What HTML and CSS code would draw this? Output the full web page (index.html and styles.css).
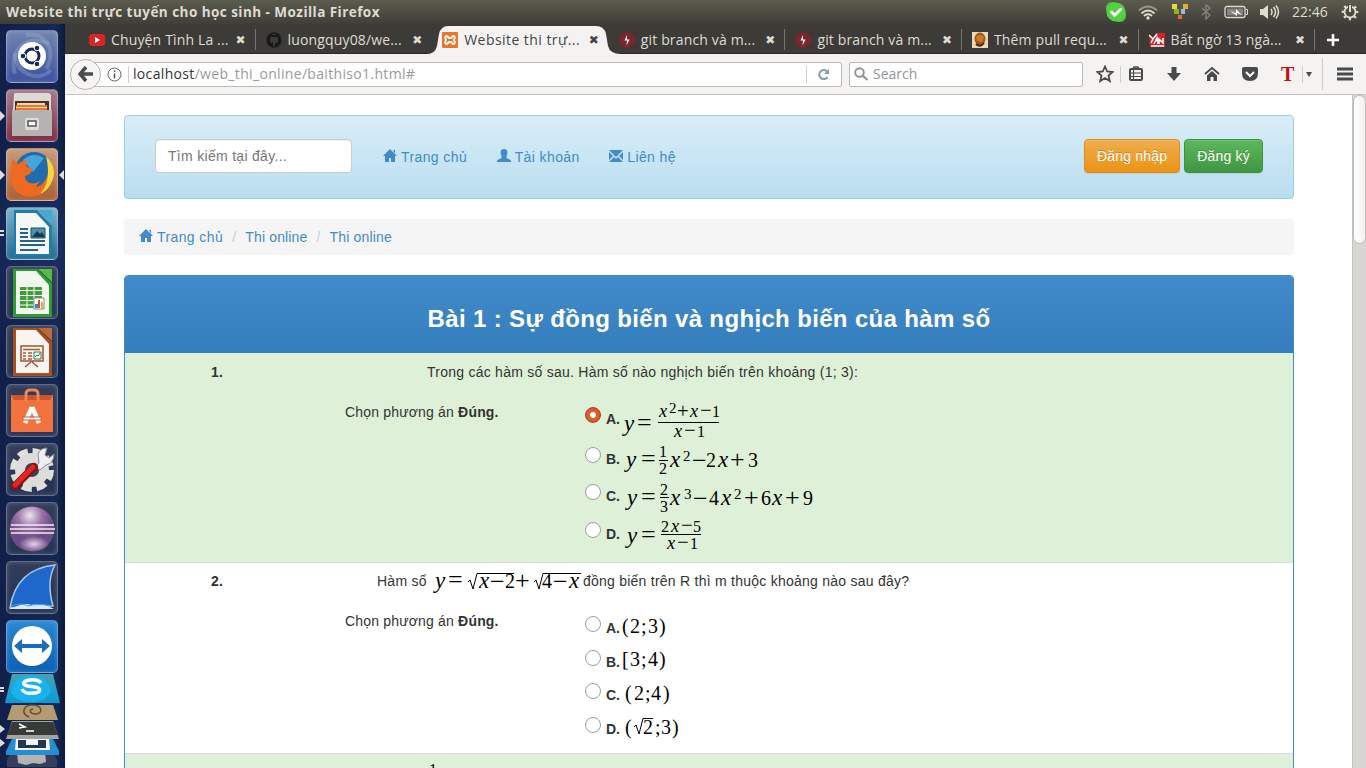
FILE: index.html
```html
<!DOCTYPE html>
<html lang="vi">
<head>
<meta charset="utf-8">
<title>Website thi trực tuyến cho học sinh</title>
<link rel="stylesheet" href="styles.css">
</head>
<body>
<header class="titlebar">
  <span class="window-title">Website thi trực tuyến cho học sinh - Mozilla Firefox</span>
  <div class="tray">
    <svg class="skype" width="22" height="22" viewBox="0 0 22 22"><rect x="1" y="1" width="13" height="13" rx="6" fill="#47c83b"/><rect x="8" y="8" width="13" height="13" rx="6" fill="#47c83b"/><circle cx="11" cy="11" r="9.6" fill="#53d044"/><path d="M6.5 11l3.2 3.2 6-6" fill="none" stroke="#fff" stroke-width="2.8" stroke-linecap="round"/></svg>
    <svg class="wifi" width="20" height="16" viewBox="0 0 20 16"><g fill="none" stroke-width="1.9" stroke-linecap="round"><path d="M1.5 6Q10-1 18.500 6" stroke="#96948c"/><path d="M4 9Q10 4 16 9M6.500 11.500Q10 9 13.500 11.500" stroke="#dfdbd2"/></g><circle cx="10" cy="14" r="1.7" fill="#dfdbd2"/></svg>
    <svg class="unikey" width="18" height="16" viewBox="0 0 18 16"><path fill="#f1d34b" d="M1 0h5v5H1z"/><path fill="#dcae3d" d="M12 0h5v5h-5z"/><path fill="#82b91f" d="M3 5h5v5H3z"/><path fill="#94b9e5" d="M10 5h4v5h-4z"/><path fill="#e86b27" d="M7 11h4v4H7z"/></svg>
    <svg class="bt" width="10" height="16" viewBox="0 0 10 16"><path d="M1 4l8 7-4 4V1l4 3-8 7" fill="none" stroke="#85837c" stroke-width="1.3"/></svg>
    <svg class="battery" width="24" height="14" viewBox="0 0 24 14"><rect x="1" y="1.500" width="20" height="11" rx="2" fill="none" stroke="#dfdbd2" stroke-width="1.300"/><path d="M3 3.500h16v7H3z" fill="#85837d"/><path d="M22 4.500h1.500v5H22" fill="none" stroke="#dfdbd2"/><path d="M6 6l6 2V4l6 6-5-2v3z" fill="#f5f3ee"/></svg>
    <svg class="sound" width="20" height="16" viewBox="0 0 20 16"><path d="M0 5h3l5-4v14l-5-4H0z" fill="#dfdbd2"/><path d="M11 5q2 3 0 6M13.500 3q4 5 0 10M16 1.500q5 6.500 0 13" fill="none" stroke="#dfdbd2" stroke-width="1.500"/></svg>
    <span class="clock">22:46</span>
    <svg class="gear" width="18" height="18" viewBox="0 0 18 18"><circle cx="9" cy="9" r="7" fill="none" stroke="#dfdbd2" stroke-width="2.600" stroke-dasharray="2.200 3.300" stroke-dashoffset="1.100"/><circle cx="9" cy="9" r="5.500" fill="none" stroke="#dfdbd2" stroke-width="1.800"/><path d="M7 1h4v6H7z" fill="#4a4943"/><path d="M9 2v7" stroke="#dfdbd2" stroke-width="2"/></svg>
  </div>
</header>
<div class="desktop">
<aside class="launcher">
  <div class="tile dash"><svg viewBox="0 0 52 53"><g fill="none" stroke="#aabbd9" stroke-opacity=".3" stroke-width="4"><path d="M9 44C2 20 22 3 43 14"/><path d="M45 40C32 54 9 43 9 23"/><path d="M20 5C43 2 50 24 40 39"/></g><circle cx="26" cy="26" r="14" fill="#fff"/><circle cx="26" cy="26" r="7" fill="none" stroke="#18285a" stroke-width="3"/><g fill="#18285a" stroke="#fff"><circle cx="17" cy="26" r="2.800"/><circle cx="31" cy="18" r="2.800"/><circle cx="31" cy="34" r="2.800"/></g></svg></div>
  <div class="tile files"><svg viewBox="0 0 52 53"><path d="M8 5q0-1 2-1h32q2 0 3 2v15H7z" fill="#ddd9d5"/><path d="M9 12h34v12H9z" fill="#4a302c"/><path d="M10 16h31v7H10z" fill="#e57930"/><path d="M11 14h28v2H11zM10 18h31v1H10z" fill="#f7d7a8"/><path d="M6 21h40v26H6z" fill="#b4b3b1"/><rect x="19" y="29" width="14" height="12" rx="2" fill="#ddd"/><path d="M22 32h8v5h-8z" fill="#fff" stroke="#555" stroke-width="1.500"/></svg><i class="pip"></i></div>
  <div class="tile firefox"><svg viewBox="0 0 52 53"><circle cx="28" cy="23" r="19" fill="#216cad"/><path d="M17 12Q27 3 38 10L27 24z" fill="#45a5dc"/><path d="M43 13C49 24 47 38 35 46 20 53 6 45 4 31L6 11l6 5q5-4 10-4-3 4-1 7l6 2-3 5-5 2c0 7 8 10 15 5l-4 6c9-2 14-12 13-26z" fill="#ee6a20"/><path d="M40 8q12 12 6 25-3 9-12 13 12-13 6-38z" fill="#ffd43b"/></svg><i class="pip"></i><i class="pip right"></i></div>
  <div class="tile writer"><svg viewBox="0 0 52 53"><path d="M8 3h23l15 16v30H8z" fill="#207daa"/><path d="M10 6h20l13 14v27H10z" fill="#f6f7f6"/><path d="M32 3h14v14z" fill="#48a8d0"/><path d="M14 22h8M14 26h8M14 30h8M14 34h25M14 38h25M14 43h18" stroke="#236582" stroke-width="2"/><path d="M25 21h14v10H25z" fill="#4c93aa" stroke="#174f65"/><path d="M26 30l5-6 3 3 2-2 3 5z" fill="#173d4b"/></svg><i class="dots"></i></div>
  <div class="tile office"><svg viewBox="0 0 52 53"><path d="M7 3h24l15 14v34H7z" fill="#2d9d32"/><path d="M10 5h20l13 14v29H10z" fill="#f3f6ee"/><path d="M32 3h14v13z" fill="#54bd43"/><path d="M14 21h22v21H14z" fill="#3c9f38"/><path d="M14 24.500h22M14 29.500h22M14 34.500h22M14 39h22M21 21v21M28 21v21" stroke="#fff"/><path d="M28 32h10v11H28z" fill="#fff" stroke="#888"/><path d="M29 38h3v4h-3z" fill="#248eda"/><path d="M32 34h2v8h-2z" fill="#d44e31"/><path d="M35 36h2v6h-2z" fill="#e5a532"/></svg></div>
  <div class="tile office"><svg viewBox="0 0 52 53"><path d="M7 3h24l15 14v34H7z" fill="#a84e21"/><path d="M10 5h20l13 14v29H10z" fill="#f8f4ef"/><path d="M32 3h14v13z" fill="#bb6a38"/><path d="M15 21h22v15H15zM25 37l-6 5m7-5 6 5" fill="none" stroke="#9f5330" stroke-width="1.500"/><path d="M17 24.500h17M17 28h3M22 28h4M17 31h3M22 31h4M17 34h3M22 34h4" stroke="#ad5732" stroke-width="1.500"/><path d="M28 27h7v7h-7z" fill="#fff" stroke="#267d48"/><path d="M29 32l2-2 1 1 2-3" fill="none" stroke="#267d48"/></svg></div>
  <div class="tile office"><svg viewBox="0 0 52 53"><path d="M5 11h42v37H5z" fill="#f2733e"/><path d="M5 11h42l-3 5H8z" fill="#cf5531"/><path d="M5 16h42v32H5z" fill="#f2733e"/><path d="M20 17V10q0-4 4-4h4q4 0 4 4v7" fill="none" stroke="#e8875f" stroke-width="3"/><path d="M19 39l6-14h2l6 14" fill="none" stroke="#fff" stroke-width="4.500"/><path d="M17 33h18v3H17z" fill="#fff" stroke="#c65a32"/></svg></div>
  <div class="tile office"><svg viewBox="0 0 52 53"><circle cx="26" cy="27" r="18" fill="none" stroke="#dfdfdd" stroke-width="8" stroke-dasharray="9.500 4.640"/><circle cx="26" cy="27" r="17" fill="#dcddda"/><circle cx="26" cy="27" r="7" fill="#39464c"/><path d="M33 20l-1-9q2-6 9-6l-2 7 4 3 5-4q0 9-8 11l-6 5-5-3z" fill="#eee" stroke="#889"/><path d="M9 43L28 24" stroke="#8e1113" stroke-width="8" stroke-linecap="round"/><path d="M9 42L27 24" stroke="#df2824" stroke-width="5" stroke-linecap="round"/></svg></div>
  <div class="tile office"><svg viewBox="0 0 52 53"><defs><radialGradient id="moon" cx=".45" cy=".2"><stop stop-color="#eee4ef"/><stop offset=".55" stop-color="#9b72a6"/><stop offset="1" stop-color="#6d4c86"/></radialGradient><radialGradient id="glow"><stop stop-color="#f0e2f5" stop-opacity=".9"/><stop offset="1" stop-color="#f0e2f5" stop-opacity="0"/></radialGradient></defs><circle cx="26" cy="27" r="22.500" fill="url(#moon)"/><ellipse cx="28" cy="42" rx="15" ry="8" fill="url(#glow)"/><path d="M5 23h43M4 27h45M5 31h43" stroke="#f3e9f5" stroke-width="1.600"/></svg></div>
  <div class="tile office"><svg viewBox="0 0 52 53"><path d="M4 47Q10 8 49 4 40 20 47 45z" fill="#1e68cc" stroke="#a0c9f4" stroke-width="1.500"/><path d="M3 48q17-7 22-4 10-3 23 4z" fill="#dce8f6"/><path d="M5 45q11-4 17 0 10-3 24 0" fill="none" stroke="#4e9be3"/></svg></div>
  <div class="tile viewer"><svg viewBox="0 0 52 53"><circle cx="26" cy="26" r="20" fill="#fff"/><path d="M8 26l8-7v5h20v-5l8 7-8 7v-5H16v5z" fill="#176db9"/></svg></div>
  <svg class="stack" viewBox="0 0 65 96"><defs><linearGradient id="blue" x2="0" y2="1"><stop stop-color="#4a9fae"/><stop offset="1" stop-color="#079cda"/></linearGradient></defs><path d="M7 88l5-11h40l5 11v7H7z" fill="#353f5b"/><path d="M17 80l5-2 5 2 6-2 6 2 6-1 1 11-6 2-7-1-7 2-8-2z" fill="#b1b4b0"/><path d="M6 79l7-14h39l7 14v4H6z" fill="#268dd1"/><path d="M16 66h33l1 12H15z" fill="#f3f6fa"/><path d="M18 68h8v5h12v-5h8v8H18z" fill="#23384e"/><path d="M6 67l6-18h41l6 18z" fill="#a2a4a1"/><path d="M7 63l5-13h41l5 13z" fill="#373b37"/><path d="M19 52l6 3-6 1m7 3h8" fill="none" stroke="#fff" stroke-width="1.500"/><path d="M7 48l5-15h41l5 15z" fill="#b59b72"/><path d="M29 45c-9-4-5-12 3-12 11 0 11 9 4 9-7 0-7-5-3-5" fill="none" stroke="#6d4a32" stroke-width="1.500"/><path d="M5 31L12 2h41l7 29z" fill="url(#blue)"/><path d="M11 20Q13 5 30 3q17 0 21 15-4 12-20 12T11 20" fill="#18b3ec"/><path d="M41 11Q38 7 30 8c-8 1-8 5-2 6l7 1c7 1 6 6-2 6-6 1-10-1-11-4" fill="none" stroke="#fff" stroke-width="3.500"/><path d="M0 16h4M0 19h4" stroke="#ddd" stroke-width="2"/><path d="M0 53l5 4-5 4M0 67l5 4-5 4" fill="#ddd"/></svg>
</aside>
<section class="browser">
  <nav class="tabs">
    <div class="tab"><svg class="fav" viewBox="0 0 16 16"><rect y="2" width="16" height="12" rx="3" fill="#dc2424"/><path d="M6 5l5 3-5 3z" fill="#fff"/></svg><span>Chuyện Tình La ...</span><b class="x">✖</b></div>
    <div class="tab no-line"><svg class="fav" viewBox="0 0 16 16"><path d="M6 15v-3q-3 1-4-2M10 15v-3q4 0 3-5l-1-4-3 1H7L4 3 3 7q-1 5 4 5" fill="none" stroke="#151513" stroke-width="2"/><circle cx="8" cy="8" r="7" fill="none" stroke="#1b1b19" stroke-width="1.500"/></svg><span>luongquy08/we...</span><b class="x">✖</b></div>
    <div class="tab active no-line"><svg class="tab-shape" viewBox="0 0 196 28" width="196" height="28"><path d="M0 28Q8 28 10 20L12 8Q14 0 21 0H169Q177 0 179 8L181 20Q183 28 194 28z" fill="#f4f3f2"/></svg><svg class="fav" viewBox="0 0 16 16"><rect width="16" height="16" rx="1" fill="#e77829"/><path d="M5 4Q2 4 4 8q-2 4 1 4l2-2h2l2 2q3 0 1-4 2-4-1-4L9 6H7z" fill="none" stroke="#fff" stroke-width="1.800"/></svg><span>Website thi trự...</span><b class="x">✖</b></div>
    <div class="tab"><svg class="fav" viewBox="0 0 16 16"><circle cx="8" cy="8" r="8" fill="#7b252c"/><path d="M8 3L5.500 8.500h2.500l-.5 5 3-6H8z" fill="#fff"/></svg><span>git branch và m...</span><b class="x">✖</b></div>
    <div class="tab"><svg class="fav" viewBox="0 0 16 16"><circle cx="8" cy="8" r="8" fill="#7b252c"/><path d="M8 3L5.500 8.500h2.500l-.5 5 3-6H8z" fill="#fff"/></svg><span>git branch và m...</span><b class="x">✖</b></div>
    <div class="tab"><svg class="fav" viewBox="0 0 16 16"><path d="M0 0h16v16H0z" fill="#e8d9b5"/><ellipse cx="8" cy="7" rx="5.500" ry="6.500" fill="#9c5a1e"/><path d="M4 5q4-4 8 0l-2 5-5-1z" fill="#cf7c20"/><path d="M4 12q4 4 8-1" stroke="#4a2712" fill="none" stroke-width="2"/></svg><span>Thêm pull requ...</span><b class="x">✖</b></div>
    <div class="tab"><svg class="fav" viewBox="0 0 16 16"><path d="M0 2l4 4 3-5 9 0v14H1z" fill="#d2232a"/><path d="M0 3l4 4 4-5M4 7l-2 4M5 12l3-6 1 6m1 0V7l4 4V6M2 14h13" stroke="#fff" stroke-width="1.500" fill="none"/></svg><span>Bất ngờ 13 ngà...</span><b class="x">✖</b></div>
    <svg class="newtab" width="14" height="14" viewBox="0 0 14 14"><path d="M7 1v12M1 7h12" stroke="#fff" stroke-width="2.600"/></svg>
  </nav>
  <div class="navbar">
    <div class="back"><svg width="16" height="16" viewBox="0 0 16 16"><path d="M8 1L2 8l6 7M2 8h13" fill="none" stroke="#4c4c4c" stroke-width="3.500"/></svg></div>
    <div class="url">
      <svg width="15" height="15" viewBox="0 0 15 15"><circle cx="7.500" cy="7.500" r="6.500" fill="none" stroke="#666"/><path d="M7.500 6.500v5M7.500 3.500v1.500" stroke="#555" stroke-width="1.500"/></svg>
      <i class="sep"></i><span class="address"><em>localhost</em>/web_thi_online/baithiso1.html#</span><i class="sep reload-sep"></i>
      <svg class="reload" width="13" height="13" viewBox="0 0 13 13"><path d="M10 3.500A4.500 4.500 0 1 0 10.500 9" fill="none" stroke="#8497a7" stroke-width="2"/><path d="M12 1v5H7z" fill="#8497a7"/></svg>
    </div>
    <div class="search"><svg width="14" height="14" viewBox="0 0 14 14"><circle cx="5.500" cy="5.500" r="4.300" fill="none" stroke="#929292" stroke-width="1.900"/><path d="M8.500 8.500l5 4.500" stroke="#929292" stroke-width="2.300"/></svg><span>Search</span></div>
    <div class="tools">
      <svg class="star" width="18" height="18" viewBox="0 0 18 18"><path d="M9 1.500l2.200 5 5.400.5-4.100 3.600 1.300 5.400L9 13l-4.800 3 1.300-5.400L1.400 7l5.400-.5z" fill="none" stroke="#4a4a4a" stroke-width="1.800"/></svg>
      <i class="sep"></i>
      <svg class="list" width="16" height="16" viewBox="0 0 16 16"><path d="M5 3l1-2h4l1 2" fill="none" stroke="#4a4a4a" stroke-width="1.500"/><rect x="2" y="3" width="12" height="11" rx="1" fill="none" stroke="#4a4a4a" stroke-width="2"/><path d="M2 7h12M2 10.500h12M5.500 4v10" stroke="#4a4a4a" stroke-width="1.200"/></svg>
      <svg class="down" width="16" height="16" viewBox="0 0 16 16"><path d="M5.500 1h5v6H15l-7 8-7-8h4.500z" fill="#4a4a4a"/></svg>
      <svg class="home" width="16" height="16" viewBox="0 0 16 16"><path d="M1 8l7-6 7 6" fill="none" stroke="#4a4a4a" stroke-width="1.800"/><path d="M3 9.500l5-4.500 5 4.500V15H9.500v-4h-3v4H3z" fill="#4a4a4a"/></svg>
      <svg class="pocket" width="18" height="16" viewBox="0 0 18 16"><path d="M3 1h12q2 0 2 2v4q0 8-8 8T1 7V3q0-2 2-2z" fill="#4a4a4a"/><path d="M5 6l4 4 4-4" fill="none" stroke="#fff" stroke-width="2"/></svg>
      <b class="tee">T</b><i class="sep"></i><i class="caret"></i><i class="sep last"></i>
      <svg class="menu" width="16" height="14" viewBox="0 0 16 14"><path d="M0 2h16M0 7h16M0 12h16" stroke="#4a4a4a" stroke-width="3"/></svg>
    </div>
  </div>
  <div class="viewport">
  <main class="page">
    <div class="well">
      <div class="field">Tìm kiếm tại đây...</div>
      <a class="link"><svg class="gi" viewBox="0 0 14 14"><path d="M7 0l7 7h-2v6H8V9H6v4H2V7H0zM10 1h2v4z" fill="#428bca"/></svg>Trang chủ</a>
      <a class="link"><svg class="gi" viewBox="0 0 14 14"><path d="M7 0c4 0 4 4 2.500 7v2l4 2q.500.500.500 2H0q0-1.500.500-2l4-2V7C3 4 3 0 7 0" fill="#428bca"/></svg>Tài khoản</a>
      <a class="link"><svg class="gi" viewBox="0 0 14 14"><path d="M0 1h14L7 8zM0 3l4 4-4 4zM14 3v8l-4-4zM5 8l2 2 2-2 5 5H0z" fill="#428bca"/></svg>Liên hệ</a>
      <button class="btn warning">Đăng nhập</button><button class="btn success">Đăng ký</button>
    </div>
    <div class="crumbs"><a><svg class="gi" viewBox="0 0 14 14"><path d="M7 0l7 7h-2v6H8V9H6v4H2V7H0zM10 1h2v4z" fill="#428bca"/></svg>Trang chủ</a><i>/</i><a>Thi online</a><i>/</i><a>Thi online</a></div>
    <section class="panel">
      <h3>Bài 1 : Sự đồng biến và nghịch biến của hàm số</h3>
      <article class="question green first">
        <b class="num">1.</b>
        <p class="ask">Trong các hàm số sau. Hàm số nào nghịch biến trên khoảng (1; 3):</p>
        <p class="pick">Chọn phương án <b>Đúng.</b></p>
        <div class="options">
          <div class="option a"><i class="radio on"></i><b>A.</b><svg class="math" viewBox="0 0 210 40"><text y="31" x="2 15"><tspan class="v">y</tspan><tspan class="op">=</tspan></text><text class="sm" y="17" x="37"><tspan class="v">x</tspan><tspan class="sup" x="47" y="13">2</tspan><tspan class="op" x="55" y="18">+</tspan><tspan class="v" x="68" y="17">x</tspan><tspan class="op" x="78">−</tspan><tspan x="90">1</tspan></text><text class="sm" y="37" x="52"><tspan class="v">x</tspan><tspan class="op" x="62">−</tspan><tspan x="75">1</tspan></text><path d="M36 22.500h61"/></svg></div>
          <div class="option b"><i class="radio"></i><b>B.</b><svg class="math" viewBox="0 0 210 40"><text y="27" x="4 19"><tspan class="v">y</tspan><tspan class="op">=</tspan></text><text class="sm" x="37" y="17">1<tspan x="37" y="34">2</tspan></text><path d="M37 20.500h9"/><text y="27"><tspan class="v" x="48">x</tspan><tspan class="sup" x="61" y="21">2</tspan><tspan class="op" x="70" y="29">−</tspan><tspan x="84" y="27">2</tspan><tspan class="v" x="96">x</tspan><tspan class="op" x="108" y="28">+</tspan><tspan x="126" y="27">3</tspan></text></svg></div>
          <div class="option c"><i class="radio"></i><b>C.</b><svg class="math" viewBox="0 0 210 40"><text y="28" x="5 19"><tspan class="v">y</tspan><tspan class="op">=</tspan></text><text class="sm" x="38" y="18">2<tspan x="38" y="35">3</tspan></text><path d="M38 20.500h9"/><text y="28"><tspan class="v" x="48">x</tspan><tspan class="sup" x="62" y="22">3</tspan><tspan class="op" x="71" y="30">−</tspan><tspan x="87" y="28">4</tspan><tspan class="v" x="99">x</tspan><tspan class="sup" x="112" y="22">2</tspan><tspan class="op" x="122" y="29">+</tspan><tspan x="139" y="28">6</tspan><tspan class="v" x="150">x</tspan><tspan class="op" x="163" y="29">+</tspan><tspan x="181" y="28">9</tspan></text></svg></div>
          <div class="option d"><i class="radio"></i><b>D.</b><svg class="math" viewBox="0 0 210 40"><text y="28" x="5 19"><tspan class="v">y</tspan><tspan class="op">=</tspan></text><text class="sm" y="17" x="39">2<tspan class="v" x="49">x</tspan><tspan class="op" x="59">−</tspan><tspan x="71">5</tspan></text><path d="M39 19.500h40"/><text class="sm" y="34"><tspan class="v" x="45">x</tspan><tspan class="op" x="55">−</tspan><tspan x="68">1</tspan></text></svg></div>
        </div>
      </article>
      <article class="question second">
        <b class="num">2.</b>
        <p class="ask">Hàm số <svg class="math inline" viewBox="0 0 150 24" width="150" height="24"><text y="17"><tspan class="v" x="2">y</tspan><tspan class="op" x="15">=</tspan><tspan class="v" x="46">x</tspan><tspan class="op" x="57" y="19">−</tspan><tspan x="72" y="17">2</tspan><tspan class="op" x="82" y="18">+</tspan><tspan x="109" y="17">4</tspan><tspan class="op" x="120" y="19">−</tspan><tspan class="v" x="136" y="17">x</tspan></text><path d="M35 11l2-2 3 9 4-15.500h37M101 11l2-2 3 9 4-15.500h38"/></svg>đồng biến trên R thì m thuộc khoảng nào sau đây?</p>
        <p class="pick">Chọn phương án <b>Đúng.</b></p>
        <div class="options">
          <div class="option e"><i class="radio"></i><b>A.</b><svg class="math" viewBox="0 0 210 40"><text y="24" x="0 8 19 26 37">(2;3)</text></svg></div>
          <div class="option f"><i class="radio"></i><b>B.</b><svg class="math" viewBox="0 0 210 40"><text y="23" x="0 8 19 26 37">[3;4)</text></svg></div>
          <div class="option e"><i class="radio"></i><b>C.</b><svg class="math" viewBox="0 0 210 40"><text y="24" x="3 12 23 29 41">(2;4)</text></svg></div>
          <div class="option f"><i class="radio"></i><b>D.</b><svg class="math" viewBox="0 0 210 40"><text y="24" x="3 21 33 39 50">(2;3)</text><path d="M12 17l2-2 3 9 4-15.500h10"/></svg></div>
        </div>
      </article>
      <article class="question green third">
        <b class="num">3.</b>
        <svg class="math tail" viewBox="0 0 150 30" width="150" height="30"><text class="sm" x="0" y="20">1</text><text class="sup" x="25" y="23">3</text><text class="sup" x="125" y="23">2</text></svg>
      </article>
    </section>
  </main>
  <div class="scrollbar"><i></i></div>
  </div>
</section>
</div>
</body>
</html>
```
FILE: styles.css
```css
* { box-sizing: border-box; }
body { margin: 0; width: 1366px; height: 768px; overflow: hidden; background: #fff; font-family: "Liberation Sans", Arial, sans-serif; font-size: 14px; line-height: 20px; color: #333; }
svg { display: block; flex: none; }
i { font-style: normal; }
.titlebar { height: 24px; display: flex; align-items: center; justify-content: space-between; background: linear-gradient(#5b5b4e, #3f3e39); color: #dfdbd2; font-family: "Open Sans", "Noto Sans", sans-serif; }
.window-title { padding-left: 6px; font-weight: 700; font-size: 13.5px; letter-spacing: .46px; white-space: nowrap; }
.tray { display: flex; align-items: center; padding-right: 7px; }
.wifi { margin-left: 11px; }
.unikey { margin-left: 13px; }
.bt { margin-left: 12px; }
.battery { margin-left: 13px; }
.sound { margin-left: 12px; }
.clock { width: 37px; margin-left: 12px; font-size: 14px; letter-spacing: 0; }
.gear { margin-left: 12px; }
.desktop { display: flex; height: 744px; }
.launcher { flex: none; width: 65px; padding: 6px 6px 0; display: flex; flex-direction: column; gap: 6px; background: radial-gradient(circle at 80% 30%, #1b2d63 0, transparent 20%), linear-gradient(90deg, #11204a, #152853 88%, #0d1938); overflow: hidden; }
.tile { position: relative; flex: none; width: 52px; height: 53px; border-radius: 5px; border: 1px solid rgba(255,255,255,.28); box-shadow: inset 0 0 5px rgba(255,255,255,.2); }
.tile > svg { width: 52px; height: 53px; margin: -1px; }
.dash { background: linear-gradient(#7285ae, #3c50a0); }
.files { background: linear-gradient(#a07d8d, #7c2942); }
.firefox { background: linear-gradient(#c29c7e, #aa6037); }
.writer { background: linear-gradient(#79b1c9, #226991); }
.office { background: linear-gradient(#333d5a, #263354); }
.viewer { background: linear-gradient(#2988d4, #0b5fb3); }
.pip { position: absolute; left: -7px; top: 21px; border: 5px solid transparent; border-left-color: #ddd; border-right: 0; }
.pip.right { left: auto; right: -7px; border-left: 0; border-right: 5px solid #ddd; }
.dots { position: absolute; left: -7px; top: 22px; width: 4px; height: 6px; border-top: 2px solid #ddd; border-bottom: 2px solid #ddd; }
.stack { width: 65px; height: 96px; margin: -7px 0 0 -6px; }
.browser { flex: 1; min-width: 0; }
.tabs { height: 30px; padding: 2px 0 0 14px; display: flex; background: #3c3b37; border-bottom: 1px solid #292824; font-family: "Open Sans", "Noto Sans", sans-serif; font-size: 14px; color: #dfdbd2; }
.tab { position: relative; flex: none; width: 176.6px; height: 27px; display: flex; align-items: center; padding: 0 10px 0 10px; }
.tab::after { content: ""; position: absolute; right: 0; top: 3px; width: 1px; height: 21px; background: #77756e; }
.no-line::after { display: none; }
.tab span { position: relative; margin-left: 6px; flex: 1; white-space: nowrap; letter-spacing: .15px; }
.fav { position: relative; width: 16px; height: 16px; }
.x { position: relative; font: 12px "DejaVu Sans", sans-serif; }
.active { color: #444; }
.active span { letter-spacing: .45px; }
.active .tab-shape { position: absolute; left: -5px; top: 0; }
.newtab { margin: 7px 0 0 11px; }
.navbar { height: 41px; display: flex; align-items: center; background: #f4f3f2; border-bottom: 1px solid #c4c2be; font-family: "Open Sans", "Noto Sans", sans-serif; font-size: 14px; }
.back { position: relative; z-index: 1; flex: none; width: 31px; height: 31px; margin-left: 5px; display: flex; align-items: center; justify-content: center; border: 1px solid #b4b4b4; border-radius: 50%; background: #f6f5f4; }
.url { flex: none; width: 755px; height: 25px; margin-left: -14px; padding: 0 11px 0 19px; display: flex; align-items: center; background: #fff; border: 1px solid #bcb9b5; border-radius: 2px; }
.sep { flex: none; width: 1px; height: 17px; background: #d0cecb; margin-left: 6px; }
.address { margin-left: 4px; flex: 1; color: #999; letter-spacing: .33px; }
.address em { font-style: normal; color: #333; }
.reload { margin-left: 10px; }
.search { flex: none; width: 234px; height: 25px; margin-left: 7px; padding-left: 4px; display: flex; align-items: center; gap: 5px; background: #fff; border: 1px solid #bcb9b5; border-radius: 2px; color: #8f969c; }
.tools { flex: 1; display: flex; align-items: center; padding-left: 13px; }
.list { margin-left: 7px; }
.down, .home { margin-left: 22px; }
.pocket { margin-left: 21px; }
.tee { width: 15px; margin-left: 22px; font: bold 20px/22px "Liberation Serif", serif; color: #c01015; }
.caret { width: 0; margin-left: 3px; border: 3px solid transparent; border-top: 5px solid #4a4a4a; border-bottom: 0; }
.sep.last { height: 32px; margin-left: 10px; }
.menu { margin-left: 14px; }
.viewport { height: 673px; display: flex; }
.page { width: 1287px; padding: 20px 58px 0 59px; background: #fff; overflow: hidden; letter-spacing: .25px; }
.well { height: 84px; display: flex; align-items: flex-start; padding: 23px 30px; border: 1px solid #9acfea; border-radius: 4px; background: linear-gradient(#d9edf7, #b9def0); }
.field { width: 197px; height: 34px; margin-right: 31px; padding: 6px 12px; border: 1px solid #ccc; border-radius: 4px; background: #fff; color: #777; box-shadow: inset 0 1px 1px rgba(0,0,0,.075); letter-spacing: .3px; }
a { color: #428bca; display: flex; letter-spacing: .4px; }
.crumbs a + i + a { letter-spacing: .15px; }
.gi { width: 14px; height: 14px; margin: 2px 4px 0 0; }
.link { margin: 8px 29.500px 0 0; }
.btn { height: 34px; padding: 0 12px; border: 1px solid #e38d13; border-radius: 4px; color: #fff; font: 14px "Liberation Sans", Arial, sans-serif; letter-spacing: .2px; box-shadow: inset 0 1px 0 rgba(255,255,255,.15), 0 1px 1px rgba(0,0,0,.08); text-shadow: 0 -1px 0 rgba(0,0,0,.2); }
.warning { margin-left: auto; background: linear-gradient(#f0ad4e, #eb9316); }
.success { margin-left: 4px; border-color: #3e8f3e; background: linear-gradient(#5cb85c, #419641); }
.crumbs { height: 36px; margin: 20px 0; padding: 8px 15px; display: flex; background: #f5f5f5; border-radius: 4px; }
.crumbs i { color: #ccc; padding: 0 9px; }
.panel { height: 800px; border: 1px solid #428bca; border-radius: 4px; overflow: hidden; }
h3 { margin: 0; height: 77px; padding-top: 30px; text-align: center; font-size: 24px; line-height: 26px; letter-spacing: .35px; color: #fff; background: linear-gradient(#428bca, #357ebd); }
.question { display: grid; grid-template-columns: 184px 1fr; grid-template-rows: 39px auto; border-top: 1px solid #ddd; padding-top: 9px; }
.green { background: #dff0d8; }
.first { height: 209px; border-top: 0; }
.second { height: 191px; padding-top: 8px; }
.third { height: 200px; }
.num { text-align: center; }
.ask, .pick { margin: 0; }
.ask { display: flex; padding-left: 118px; white-space: pre; }
.second .ask { padding-left: 68px; }
.inline { margin-left: 2px; }
.pick { grid-column: 1; grid-row: 2; margin-left: 220px; white-space: nowrap; padding-top: 1px; letter-spacing: .18px; }
.options { grid-column: 2; grid-row: 2; margin-left: 276px; margin-top: -1px; }
.option { display: flex; }
.option > b { width: 16px; margin: 9px 0 0 5px; white-space: nowrap; letter-spacing: 0; }
.radio { flex: none; width: 16px; height: 16px; margin-top: 7px; border: 1px solid #9d9d9d; border-radius: 50%; background: #fff; }
.radio.on { border-color: #b5441b; background: radial-gradient(circle, #fff 0 2.500px, #dc5b31 3.500px 6px, #c2522b 7px); }
.a { height: 40px; }
.b { height: 37px; }
.c { height: 38px; }
.d { height: 38px; }
.e { height: 34px; }
.f { height: 33px; }
.math { font-family: "Liberation Serif", serif; font-size: 20px; color: #000; overflow: visible; letter-spacing: 0; }
.option .math { width: 210px; height: 40px; margin-right: -100px; }
.math text { fill: #000; }
.math path { fill: none; stroke: #000; stroke-width: 1; }
.math .v { font-style: italic; font-size: 1.15em; }
.math .op { font-size: 1.3em; }
.math .sm { font-size: 16px; }
.math .sup { font-size: 15px; }
.tail { margin-left: 120px; margin-top: -8px; }
.scrollbar { width: 14px; background: #d8d6d3; border-left: 1px solid #c6c3be; }
.scrollbar i { display: block; width: 13px; height: 149px; border-radius: 7px; border: 1px solid #c0bdb8; background: linear-gradient(90deg, #fff, #f2f1ef); }
```
